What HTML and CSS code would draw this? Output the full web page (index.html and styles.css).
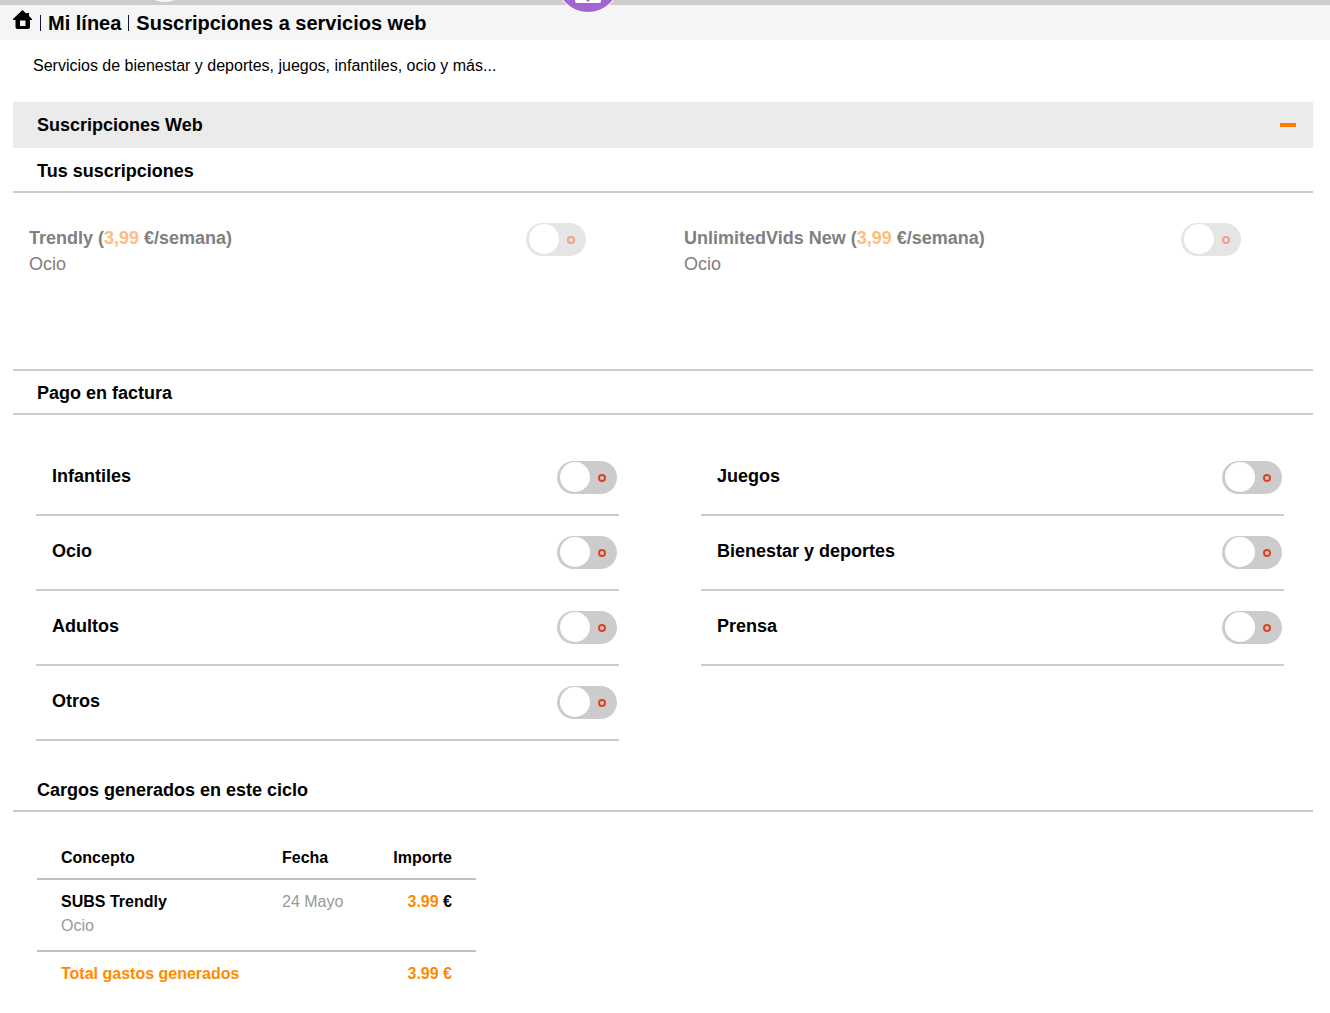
FILE: index.html
```html
<!DOCTYPE html>
<html lang="es">
<head>
<meta charset="utf-8">
<title>Suscripciones a servicios web</title>
<link rel="stylesheet" href="styles.css">
</head>
<body>
<header class="topbar">
  <svg class="topbar-mark" width="30" height="5" viewBox="0 0 30 5" aria-hidden="true"><ellipse cx="15" cy="-2" rx="12" ry="4" fill="#f5f5f5"/></svg>
  <svg class="topbar-badge" width="64" height="14" viewBox="0 0 64 14" aria-hidden="true">
    <circle cx="32" cy="-19" r="32" fill="#fff"/>
    <circle cx="32" cy="-19" r="31" fill="#a364d1"/>
    <path d="M19 0H45V1Q45 3 43 3H21Q19 3 19 1Z" fill="#fff"/>
    <path d="M30 0H34L32 2Z" fill="#a364d1"/>
  </svg>
</header>
<nav class="breadcrumb" aria-label="Ruta">
  <a class="home" href="#" aria-label="Inicio">
    <svg width="20" height="20" viewBox="0 0 20 20" aria-hidden="true"><path fill="#000" fill-rule="evenodd" d="M9.500 0L0 9V10H2.500V17Q2.500 19 4.500 19H15Q17 19 17 17V10H19V9L16 6V3H13.500V3.800ZM7 10.500H12.500V16H7Z"/></svg>
  </a>
  <span class="sep"></span>
  <a href="#">Mi línea</a>
  <span class="sep"></span>
  <h1>Suscripciones a servicios web</h1>
</nav>
<main>
  <p class="intro">Servicios de bienestar y deportes, juegos, infantiles, ocio y más...</p>
  <button class="panel-head" type="button" aria-expanded="true">Suscripciones Web<span class="minus"></span></button>

  <h2>Tus suscripciones</h2>
  <div class="subs">
    <div class="sub">
      <label for="s1"><b>Trendly (<span>3,99</span> €/semana)</b>Ocio</label>
      <input class="toggle" type="checkbox" id="s1" disabled>
    </div>
    <div class="sub">
      <label for="s2"><b>UnlimitedVids New (<span>3,99</span> €/semana)</b>Ocio</label>
      <input class="toggle" type="checkbox" id="s2" disabled>
    </div>
  </div>

  <h2 class="ruled">Pago en factura</h2>
  <div class="options">
    <div class="option"><label for="o1">Infantiles</label><input class="toggle" type="checkbox" id="o1"></div>
    <div class="option"><label for="o2">Juegos</label><input class="toggle" type="checkbox" id="o2"></div>
    <div class="option"><label for="o3">Ocio</label><input class="toggle" type="checkbox" id="o3"></div>
    <div class="option"><label for="o4">Bienestar y deportes</label><input class="toggle" type="checkbox" id="o4"></div>
    <div class="option"><label for="o5">Adultos</label><input class="toggle" type="checkbox" id="o5"></div>
    <div class="option"><label for="o6">Prensa</label><input class="toggle" type="checkbox" id="o6"></div>
    <div class="option"><label for="o7">Otros</label><input class="toggle" type="checkbox" id="o7"></div>
  </div>

  <h2>Cargos generados en este ciclo</h2>
  <table class="charges">
    <thead>
      <tr><th class="concept">Concepto</th><th>Fecha</th><th class="amount">Importe</th></tr>
    </thead>
    <tbody>
      <tr><td><strong>SUBS Trendly</strong><br>Ocio</td><td>24 Mayo</td><td class="amount"><span>3.99</span> €</td></tr>
    </tbody>
    <tfoot>
      <tr><td colspan="2">Total gastos generados</td><td class="amount">3.99 €</td></tr>
    </tfoot>
  </table>
</main>
</body>
</html>
```
FILE: styles.css
```css
*,
*::before,
*::after { box-sizing: border-box; }

body {
  margin: 0;
  background: #fff;
  color: #000;
  font: 16px/24px "Liberation Sans", Arial, Helvetica, sans-serif;
}

.topbar {
  position: relative;
  height: 5px;
  background: #ccc;
}
.topbar-mark { position: absolute; top: 0; left: 150px; }
.topbar-badge { position: absolute; top: 0; left: 556px; z-index: 1; }

.breadcrumb {
  display: flex;
  align-items: center;
  gap: 7px;
  height: 35px;
  padding: 0 13px;
  background: #f5f5f5;
  font-size: 20px;
  font-weight: bold;
}
.breadcrumb a { color: #000; text-decoration: none; }
.breadcrumb h1 { margin: 0; font-size: 20px; }
.home { padding-bottom: 5px; }
.home svg { display: block; }
.sep { width: 1px; height: 16px; background: #113; }

main { padding: 14px 17px 24px 13px; }

.intro { margin: 0 20px 24px; }

.panel-head {
  display: flex;
  align-items: center;
  justify-content: space-between;
  width: 100%;
  height: 46px;
  padding: 0 17px 0 24px;
  border: 0;
  background: #ebebeb;
  color: #000;
  font: bold 18px/24px "Liberation Sans", Arial, Helvetica, sans-serif;
}
.minus { width: 16px; height: 4px; background: #ff7900; }

h2 {
  margin: 0;
  padding: 11px 24px 8px;
  border-bottom: 2px solid #ccc;
  font-size: 18px;
  line-height: 24px;
}
h2.ruled {
  padding-top: 10px;
  border-top: 2px solid #ccc;
}

.subs {
  display: grid;
  grid-template-columns: 1fr 1fr;
  column-gap: 98px;
  min-height: 176px;
  padding: 30px 72px 0 16px;
  color: #808080;
  font-size: 18px;
  line-height: 26px;
}
.sub {
  display: flex;
  align-items: flex-start;
  justify-content: space-between;
}
.sub label { padding-top: 2px; }
.sub b { display: block; }
.sub span { color: #ffbc80; }

.options {
  display: grid;
  grid-template-columns: 1fr 1fr;
  column-gap: 82px;
  padding: 26px 29px 26px 23px;
  font-size: 18px;
  font-weight: bold;
}
.option {
  display: flex;
  align-items: center;
  justify-content: space-between;
  height: 75px;
  padding: 0 2px 0 16px;
  border-bottom: 2px solid #ccc;
}
.option label { padding-bottom: 4px; }

.toggle {
  appearance: none;
  display: flex;
  flex: none;
  justify-content: space-between;
  width: 60px;
  height: 33px;
  margin: 0;
  padding: 1px 11px 1px 3px;
  border-radius: 17px;
  background: #ccc;
}
.toggle::before {
  content: "";
  width: 30px;
  height: 30px;
  border-radius: 50%;
  background: #fff;
}
.toggle::after {
  content: "";
  width: 8px;
  height: 8px;
  margin-top: 12px;
  border: 2px solid #dc4421;
  border-radius: 50%;
}
.toggle:checked { flex-direction: row-reverse; }
.toggle:disabled { opacity: .5; }

.charges {
  width: 439px;
  margin: 34px 24px 0;
  border-collapse: collapse;
  table-layout: fixed;
  color: #999;
}
.charges th,
.charges td {
  padding: 0 0 8px;
  text-align: left;
  vertical-align: top;
}
.charges th { color: #000; }
.charges th:first-child,
.charges td:first-child { padding-left: 24px; }
.charges .concept { width: 245px; }
.charges thead tr,
.charges tbody tr { border-bottom: 2px solid #bfbfbf; }
.charges .amount {
  padding-right: 24px;
  color: #000;
  font-weight: bold;
  text-align: right;
}
.charges .amount span { color: #ff8a00; }
.charges strong { color: #000; }
.charges tbody td { padding-top: 10px; padding-bottom: 12px; }
.charges tfoot td,
.charges tfoot .amount {
  padding-top: 10px;
  color: #ff8a00;
  font-weight: bold;
}
```
